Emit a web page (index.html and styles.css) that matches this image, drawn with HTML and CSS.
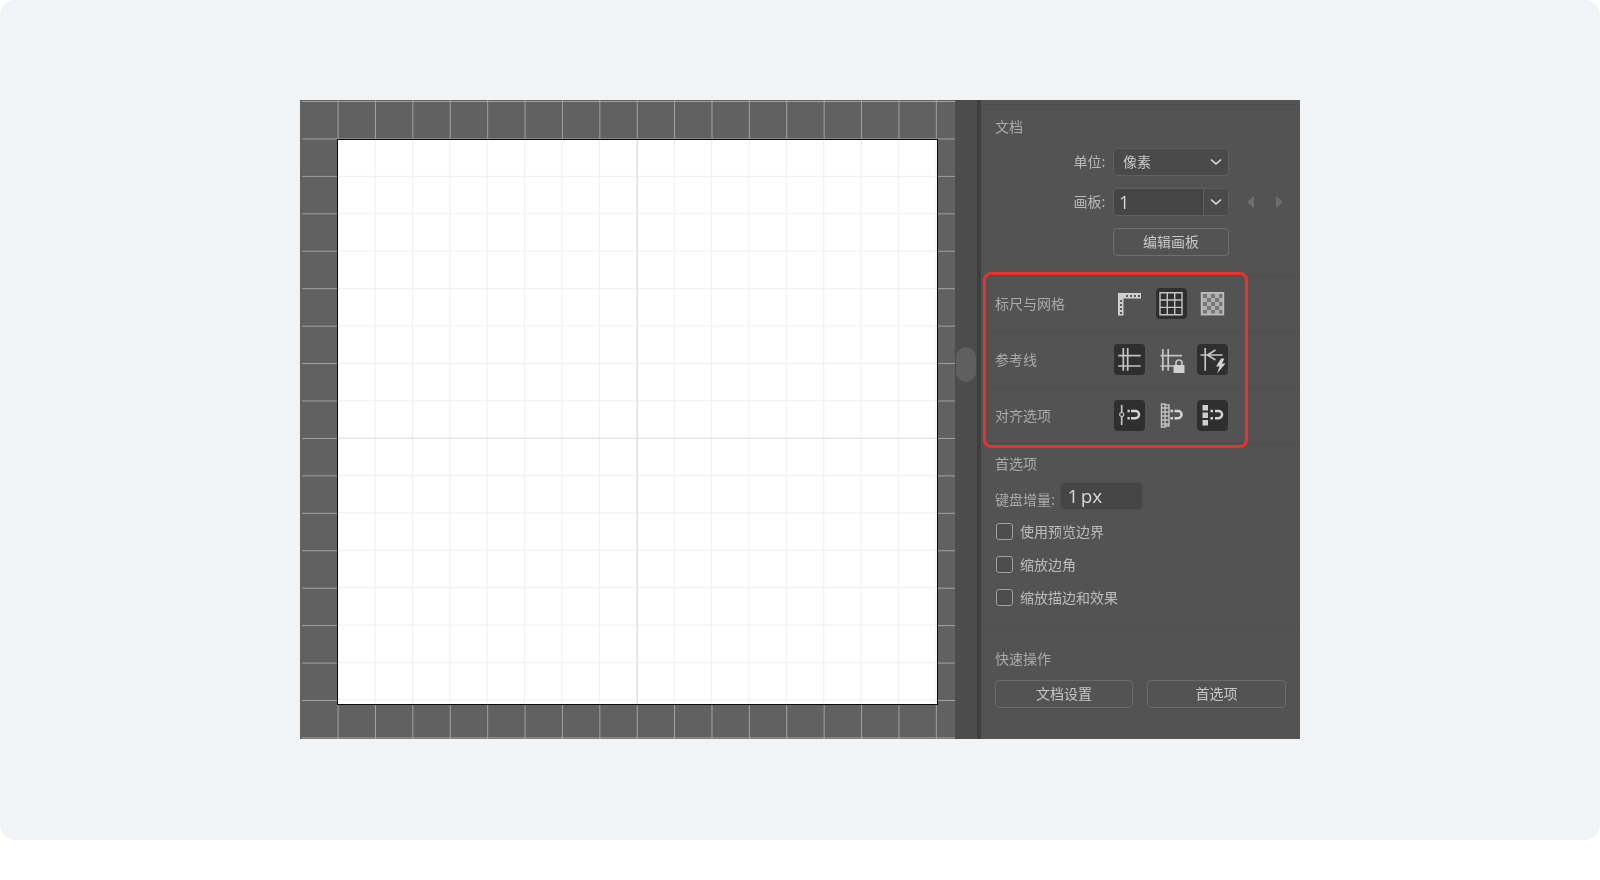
FILE: index.html
```html
<!DOCTYPE html>
<html lang="zh-CN">
<head>
<meta charset="utf-8">
<title>文档属性</title>
<link rel="stylesheet" href="styles.css">
</head>
<body>
<main class="page">
  <div class="window">
    <section class="canvas"><div class="artboard"></div></section>
    <div class="scroll"><div class="thumb"></div></div>
    <div class="split"></div>
    <aside class="panel">
      <div class="strip"></div>
      <section class="doc">
        <h2 class="title">文档</h2>
        <div class="fields">
          <div class="field">
            <span class="field-label">单位:</span>
            <div class="select"><span class="select-value">像素</span>
              <svg class="chev" viewBox="0 0 12 8"><path d="M1 1.5l5 4.5 5-4.5"/></svg>
            </div>
          </div>
          <div class="field">
            <span class="field-label">画板:</span>
            <div class="combo">
              <span class="combo-value">1</span>
              <span class="combo-arrow"><svg class="chev" viewBox="0 0 12 8"><path d="M1 1.5l5 4.5 5-4.5"/></svg></span>
            </div>
            <svg class="tri" viewBox="0 0 7 12"><path d="M7 0v12L0 6z"/></svg>
            <svg class="tri tri-next" viewBox="0 0 7 12"><path d="M0 0v12l7-6z"/></svg>
          </div>
          <button class="btn btn-edit">编辑画板</button>
        </div>
      </section>

      <div class="tool-row">
        <span class="tool-label">标尺与网格</span>
        <div class="tools">
          <span class="tool">
            <svg viewBox="0 0 31 31">
              <path class="fill" d="M4 5h23v5.500h-17.500v17H4z"/>
              <path class="dots" d="M12 7h2v2h-2zM16 7h2v2h-2zM20 7h2v2h-2zM24 7h2v2h-2zM6 12h2v2H6zM6 16h2v2H6zM6 20h2v2H6zM6 24h2v2H6z"/>
            </svg>
          </span>
          <span class="tool on">
            <svg viewBox="0 0 31 31"><path class="line thin" d="M4 4.700h22v22H4zM11.300 4.700v22M18.700 4.700v22M4 12h22M4 19.400h22"/></svg>
          </span>
          <span class="tool">
            <svg viewBox="0 0 31 31">
              <rect class="chk-a" x="4.500" y="4.700" width="22" height="22"/>
              <path class="chk-b" d="M6 6h4v4H6zM14 6h4v4h-4zM22 6h3.500v4H22zM10 10h4v4h-4zM18 10h4v4h-4zM6 14h4v4H6zM14 14h4v4h-4zM22 14h3.500v4H22zM10 18h4v4h-4zM18 18h4v4h-4zM6 22h4v3.500H6zM14 22h4v3.500h-4zM22 22h3.500v3.500H22z"/>
              <rect class="chk-edge" x="4.500" y="4.700" width="22" height="22"/>
            </svg>
          </span>
        </div>
      </div>

      <div class="tool-row">
        <span class="tool-label">参考线</span>
        <div class="tools">
          <span class="tool on">
            <svg viewBox="0 0 31 31"><path class="line" d="M9.300 4v22.700M13.700 4v22.700M4.300 11.700h22.400M4.300 22h22.400"/></svg>
          </span>
          <span class="tool">
            <svg viewBox="0 0 31 31">
              <path class="line" d="M6.800 5v21.700M12.200 5v21.700M4.500 11.700h21.500M4.500 22h13"/>
              <path class="fill" d="M17.500 21h11v8h-11z"/>
              <path class="line" d="M20 21v-2a3 3 0 0 1 6 0v2"/>
            </svg>
          </span>
          <span class="tool on">
            <svg viewBox="0 0 31 31">
              <path class="line" d="M8.200 4v22.700M3.500 11h22M18.500 6l-8 5 8 5"/>
              <path class="fill" d="M24 14.500h3.500l-2.500 5h3.500L20 29.500l2.500-7H19z"/>
            </svg>
          </span>
        </div>
      </div>

      <div class="tool-row">
        <span class="tool-label">对齐选项</span>
        <div class="tools">
          <span class="tool on">
            <svg viewBox="0 0 31 31">
              <path class="line" d="M7.700 5v20"/>
              <circle class="knob" cx="7.700" cy="14.500" r="2"/>
              <path class="magnet" d="M17 11h4.500a3.600 3.600 0 0 1 0 7.200H17"/>
              <path class="tips" d="M13.500 11h2.200M13.500 18.200h2.200"/>
            </svg>
          </span>
          <span class="tool">
            <svg viewBox="0 0 31 31">
              <path class="line thin" d="M5.500 4h3.500v23H5.500zM9 5h4v21H9M5.500 8h7.500M5.500 12h7.500M5.500 16h7.500M5.500 20h7.500M5.500 24h7.500"/>
              <path class="magnet" d="M18.500 11h3.500a3.600 3.600 0 0 1 0 7.200h-3.500"/>
              <path class="tips" d="M14.500 11h2.500M14.500 18.200h2.500"/>
            </svg>
          </span>
          <span class="tool on">
            <svg viewBox="0 0 31 31">
              <path class="fill" d="M5.500 5h5.500v5.500H5.500zM5.500 12.500h5.500V18H5.500zM5.500 20h5.500v5.500H5.500z"/>
              <path class="magnet" d="M18 11h3.500a3.600 3.600 0 0 1 0 7.200H18"/>
              <path class="tips" d="M13.500 11h2.500M13.500 18.200h2.500"/>
            </svg>
          </span>
        </div>
      </div>

      <section class="prefs">
        <h2 class="title">首选项</h2>
        <div class="key-row">
          <span class="key-label">键盘增量:</span>
          <div class="key-input">1 px</div>
        </div>
        <ul class="checks">
          <li class="check"><span class="box"></span>使用预览边界</li>
          <li class="check"><span class="box"></span>缩放边角</li>
          <li class="check"><span class="box"></span>缩放描边和效果</li>
        </ul>
      </section>

      <section class="quick">
        <h2 class="title">快速操作</h2>
        <div class="quick-btns">
          <button class="btn">文档设置</button>
          <button class="btn">首选项</button>
        </div>
      </section>

      <div class="highlight"></div>
    </aside>
  </div>
</main>
</body>
</html>
```

FILE: styles.css
```css
* { box-sizing: border-box; }
html, body { margin: 0; background: #fff; }
body { font-family: "Noto Sans CJK SC", "Liberation Sans", sans-serif; }

.page {
  height: 840px;
  padding: 100px 0 0 300px;
  background: #f2f3f5;
  border-radius: 16px;
  overflow: hidden;
}
.window {
  display: flex;
  width: 1000px;
  height: 639px;
  filter: blur(0.4px);
}

/* canvas */
.canvas {
  width: 655px;
  flex: none;
  padding: 38.500px 0 0 35px;
  border-left: 2px solid #616161;
  background-color: #616161;
  background-image:
    linear-gradient(90deg, #a2a2a2 1.300px, transparent 1.300px),
    linear-gradient(180deg, #a2a2a2 1.300px, transparent 1.300px);
  background-size: 37.4px 100%, 100% 37.45px;
  background-position: 35.600px 0, 0 1px;
  background-clip: padding-box;
}
.artboard {
  width: 600.500px;
  height: 566px;
  border: 1.800px solid #0c0c0c;
  background-color: #fff;
  background-image:
    linear-gradient(90deg, transparent 298.500px, #dedede 298.500px, #dedede 300px, transparent 300px),
    linear-gradient(180deg, transparent 297.800px, #e0e0e0 297.800px, #e0e0e0 299px, transparent 299px),
    linear-gradient(90deg, #efefef 1.200px, transparent 1.200px),
    linear-gradient(180deg, #efefef 1.200px, transparent 1.200px);
  background-size: 100% 100%, 100% 100%, 37.4px 100%, 100% 37.4px;
  background-position: 0 0, 0 0, -0.800px 0, 0 -1.500px;
}

/* scroll strip */
.scroll {
  width: 22px;
  flex: none;
  padding: 247px 1px 0;
  background: #4c4c4c;
}
.thumb {
  height: 35px;
  border-radius: 10px;
  background: #5f5f5f;
}
.split { width: 4px; flex: none; background: #3e3e3e; }

/* panel */
.panel {
  position: relative;
  flex: 1;
  background: #535353;
  color: #b4b4b4;
  font-size: 14px;
  line-height: 20px;
}
.strip { height: 5px; border-bottom: 1px solid #4d4d4d; }
.title { margin: 0; font-size: 14px; font-weight: 400; line-height: 20px; color: #aaa; }

.doc {
  height: 171px;
  padding: 11px 14px 0;
  border-bottom: 1px solid #4d4d4d;
}
.fields {
  display: flex;
  flex-direction: column;
  gap: 12px;
  margin-top: 12px;
}
.field { display: flex; align-items: center; height: 28px; }
.field-label { width: 110.500px; margin-right: 7.500px; padding-bottom: 2px; text-align: right; color: #b8b8b8; }
.select, .combo {
  display: flex;
  width: 116px;
  height: 28px;
  border: 1px solid #5f5f5f;
  border-radius: 4px;
  background: #4a4a4a;
  color: #c8c8c8;
  align-items: center;
}
.select { justify-content: space-between; padding: 0 6px 0 9px; }
.select-value { padding-bottom: 2px; }
.chev { width: 12px; height: 8px; fill: none; stroke: #e2e2e2; stroke-width: 1.500; }
.combo { background: #454545; overflow: hidden; }
.combo-value {
  flex: 1;
  padding-left: 5px;
  font-family: "Open Sans", sans-serif;
  font-size: 18px;
  font-weight: 400;
  color: #d4d4d4;
}
.combo-arrow {
  display: flex;
  align-items: center;
  justify-content: center;
  width: 25px;
  height: 100%;
  border-left: 1px solid #5f5f5f;
  background: #4a4a4a;
}
.tri { width: 7px; height: 12px; margin-left: 18px; fill: #6e6e6e; }
.tri-next { margin-left: 22px; }

.btn {
  display: block;
  height: 28px;
  padding: 0 0 2px;
  border: 1px solid #6e6e6e;
  border-radius: 4px;
  background: #535353;
  color: #c6c6c6;
  font: inherit;
  font-size: 14px;
}
.btn-edit { width: 116px; margin-left: 118px; }

.tool-row {
  display: flex;
  align-items: center;
  height: 56px;
  padding-left: 14px;
  border-bottom: 1px solid #4d4d4d;
}
.tool-label { width: 119px; padding-bottom: 2px; color: #aaa; }
.tools { display: flex; gap: 10.500px; }
.tool { width: 31px; height: 31px; border-radius: 4px; }
.tool svg { display: block; width: 31px; height: 31px; }
.tool.on { background: #2f2f2f; }
.line { fill: none; stroke: #c4c4c4; stroke-width: 1.700; }
.thin { stroke-width: 1.400; }
.fill { fill: #cfcfcf; }
.dots { fill: #5a5a5a; }
.chk-a { fill: #b0b0b0; }
.chk-b { fill: #777; }
.chk-edge { fill: none; stroke: #bdbdbd; stroke-width: 1.400; }
.knob { fill: #2f2f2f; stroke: #c4c4c4; stroke-width: 1.200; }
.magnet { fill: none; stroke: #d4d4d4; stroke-width: 2.400; }
.tips { fill: none; stroke: #d4d4d4; stroke-width: 2.400; }

.prefs { height: 187px; padding: 9px 14px 0; border-bottom: 1px solid #4d4d4d; }
.key-row { display: flex; margin-top: 9px; gap: 5px; }
.key-label { margin-top: 6.500px; color: #a8a8a8; }
.key-input {
  width: 83px;
  height: 28px;
  padding-left: 6.500px;
  border: 1px solid #4f4f4f;
  border-radius: 4px;
  background: #464646;
  color: #d6d6d6;
  font-family: "Open Sans", sans-serif;
  font-size: 19px;
  font-weight: 400;
  word-spacing: -2.500px;
  line-height: 26px;
}
.checks {
  display: flex;
  flex-direction: column;
  gap: 16px;
  margin: 13px 0 0;
  padding: 0;
  list-style: none;
}
.check { display: flex; align-items: flex-start; gap: 7px; height: 17px; line-height: 16px; color: #bcbcbc; }
.box {
  width: 17px;
  height: 17px;
  margin-left: 1px;
  border: 1.500px solid #a0a0a0;
  border-radius: 3px;
  background: #4d4d4d;
}

.quick { padding: 17px 14px 0; }
.quick-btns { display: flex; gap: 14px; margin-top: 12px; }
.quick-btns .btn { width: 138px; border-color: #6a6a6a; }
.quick-btns .btn + .btn { width: 139px; }

.highlight {
  position: absolute;
  left: 1.500px;
  top: 172px;
  width: 265px;
  height: 176px;
  border: 3px solid #e7332c;
  border-radius: 8px;
  pointer-events: none;
}
```
